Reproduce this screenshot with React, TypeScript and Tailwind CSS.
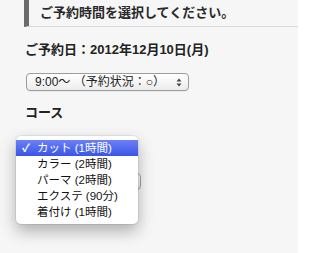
export default function App() {
  const courses = ["カット (1時間)", "カラー (2時間)", "パーマ (2時間)", "エクステ (90分)", "着付け (1時間)"];

  return (
    <div
      className="relative w-[298px] h-[253px] overflow-hidden bg-[#f6f6f6] text-[#222]"
      style={{ fontFamily: '"Liberation Sans", "Noto Sans CJK JP", sans-serif' }}
    >
      {/* heading */}
      <div className="ml-[24px] h-[27px] border-l-[5px] border-l-[#6b6b6b] border-b border-b-[#dadada] pl-[11px] pt-[4px]">
        <h2 className="text-[13px] font-bold leading-[18px] text-[#2a2a2a]">ご予約時間を選択してください。</h2>
      </div>

      <p className="mt-[15px] pl-[25px] text-[13px] font-bold leading-[16px]">ご予約日：2012年12月10日(月)</p>

      {/* time select */}
      <div className="mt-[15px] ml-[26px] w-[163px] h-[18px] flex items-center justify-between rounded-[4px] border border-[#9c9c9c] bg-gradient-to-b from-white to-[#ececec] pl-[8px] pr-[6px] shadow-[0_1px_0_rgba(0,0,0,0.05)]">
        <span className="text-[12px] leading-[16px]">9:00〜 （予約状況：○）</span>
        <svg width="6" height="9" viewBox="0 0 6 9">
          <path d="M3 0.5 L5.5 3.5 H0.5 Z" fill="#444" />
          <path d="M3 8.5 L5.5 5.5 H0.5 Z" fill="#444" />
        </svg>
      </div>

      <p className="mt-[14px] pl-[25px] text-[13px] font-bold leading-[16px]">コース</p>

      {/* course select (covered by menu) */}
      <div className="mt-[52px] ml-[26px] w-[115px] h-[17px] rounded-[4px] border border-[#a8a8a8] bg-gradient-to-b from-white to-[#ececec]" />

      {/* open dropdown */}
      <div className="absolute left-[16px] top-[136px] w-[122px] rounded-[5px] bg-white py-[4px] shadow-[0_7px_16px_rgba(0,0,0,0.3),0_0_0_1px_rgba(0,0,0,0.06)]">
        {courses.map((c, i) => (
          <div
            key={c}
            className={
              i === 0
                ? "flex h-[16px] items-center bg-gradient-to-b from-[#6c80f6] to-[#3a54e6] text-white"
                : "flex h-[16px] items-center text-[#111]"
            }
          >
            <span className="w-[21px] pl-[6px] text-[11px] font-bold leading-[16px]">{i === 0 ? "✓" : ""}</span>
            <span className="text-[11.5px] leading-[16px]">{c}</span>
          </div>
        ))}
      </div>
    </div>
  );
}
